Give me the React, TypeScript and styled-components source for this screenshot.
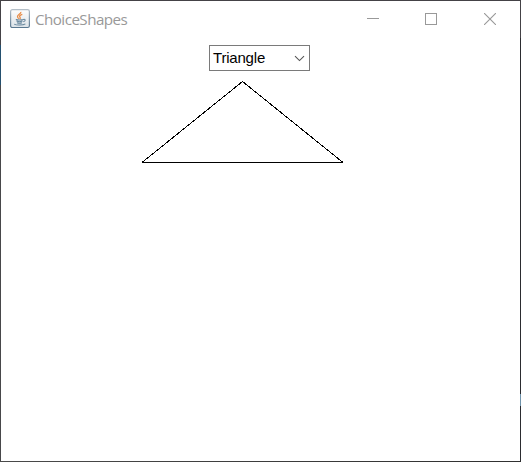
import React from "react";
import styled, { createGlobalStyle } from "styled-components";

const GlobalStyle = createGlobalStyle`
  html, body { margin: 0; padding: 0; overflow: hidden; background: #fff; }
  *, *::before, *::after { box-sizing: border-box; }
`;

const WindowFrame = styled.div`
  width: 521px;
  height: 462px;
  padding: 1px;
  background:
    linear-gradient(#444246, #444246) 0 0 / 100% 1px no-repeat,
    linear-gradient(90deg, #4a4a4a, #303030) 0 100% / 100% 1px no-repeat,
    linear-gradient(#444246 0 45px, #24506f 45px 85px, #48484a 85px) 0 0 / 1px 100% no-repeat,
    linear-gradient(#444246 0 38px, #2b2c30 38px 394px, #6f93ab 394px 406px, #2b2c30 406px) 100% 0 / 1px 100% no-repeat;
`;

const WindowBody = styled.div`
  display: flex;
  flex-direction: column;
  width: 519px;
  height: 460px;
  background: #fff;
`;

const TitleBar = styled.header`
  display: flex;
  align-items: center;
  height: 36px;
  padding-left: 9px;
`;

const Title = styled.h1`
  flex: 1;
  margin: 0 0 0 5px;
  font: 400 15.2px/20px "Open Sans", "Noto Sans", sans-serif;
  letter-spacing: -0.55px;
  color: #999;
`;

const WindowButton = styled.button<{ $width: number }>`
  display: flex;
  align-items: center;
  justify-content: center;
  width: ${(p) => p.$width}px;
  height: 36px;
  padding: 0;
  border: 0;
  background: transparent;
`;

const Glyph = styled.svg`
  display: block;
  flex: none;
`;

const Content = styled.main`
  display: flex;
  flex-direction: column;
  flex: 1;
  padding-top: 8px;
`;

const Choice = styled.button`
  display: flex;
  align-items: center;
  justify-content: space-between;
  width: 101px;
  height: 26px;
  margin-left: 208px;
  padding: 0 4px 0 3px;
  border: 1px solid #7a7a7a;
  border-radius: 0;
  background: #fff;
  color: #000;
  font: 400 15px/18px "Liberation Sans", Arial, sans-serif;
  letter-spacing: -0.2px;
`;

const Shape = styled.svg`
  display: block;
  margin: 9px 0 0 140px;
`;

function JavaIcon() {
  return (
    <Glyph width="20" height="20" viewBox="0 0 20 20">
      <defs>
        <linearGradient id="tile" x1="0" y1="0" x2="0" y2="1">
          <stop offset="0" stopColor="#fdfdfd" />
          <stop offset="1" stopColor="#dbe2e7" />
        </linearGradient>
        <linearGradient id="edge" x1="0" y1="0" x2="0" y2="1">
          <stop offset="0" stopColor="#b3bec7" />
          <stop offset="1" stopColor="#5a7890" />
        </linearGradient>
      </defs>
      <rect x="0.6" y="0.6" width="18.8" height="17.9" rx="1.8" fill="url(#tile)" stroke="url(#edge)" strokeWidth="1.2" />
      <path d="M10.9 2.8C11.4 5 7.3 5.6 7.5 7.7c.1 1 1 1.4 1.3 2.1M12.3 5.4C9.8 6.3 9 7.2 9.9 8.2c.6.7.4 1.3-.2 1.8" fill="none" stroke="#e98b45" strokeWidth="1.25" />
      <path d="M5.8 10.4c1.5.7 5.8.7 7.5 0M6.5 12.1c1.5.6 4.5.6 6 0M7 13.7c1.2.5 3.8.5 5 0M4.2 15.1c2 1.3 9 1.3 11.2-.3M13.2 10.5c2.6-.8 2.8 1.4.1 2.3" fill="none" stroke="#64849b" strokeWidth="1.05" />
    </Glyph>
  );
}

export default function App() {
  return (
    <>
      <GlobalStyle />
      <WindowFrame>
        <WindowBody>
          <TitleBar>
            <JavaIcon />
            <Title>ChoiceShapes</Title>
            <WindowButton $width={58} aria-label="Minimize">
              <Glyph width="12" height="12" viewBox="0 0 12 12">
                <path d="M0 5.5h12" stroke="#999" />
              </Glyph>
            </WindowButton>
            <WindowButton $width={58} aria-label="Maximize">
              <Glyph width="12" height="12" viewBox="0 0 12 12">
                <rect x="0.5" y="0.5" width="11" height="11" fill="none" stroke="#999" />
              </Glyph>
            </WindowButton>
            <WindowButton $width={60} aria-label="Close">
              <Glyph width="12" height="12" viewBox="0 0 12 12">
                <path d="M0 0l12 12M12 0L0 12" stroke="#999" strokeWidth="1.1" />
              </Glyph>
            </WindowButton>
          </TitleBar>
          <Content>
            <Choice aria-haspopup="listbox">
              <span>Triangle</span>
              <Glyph width="11" height="7" viewBox="0 0 11 7">
                <path d="M1 1.2l4.5 4.4L10 1.2" fill="none" stroke="#555" strokeWidth="1.1" />
              </Glyph>
            </Choice>
            <Shape width="204" height="84" viewBox="0 0 204 84" shapeRendering="crispEdges">
              <path d="M1 82.5L101.5 1.5L202 82.5M1 82.5H202" fill="none" stroke="#000" />
            </Shape>
          </Content>
        </WindowBody>
      </WindowFrame>
    </>
  );
}
